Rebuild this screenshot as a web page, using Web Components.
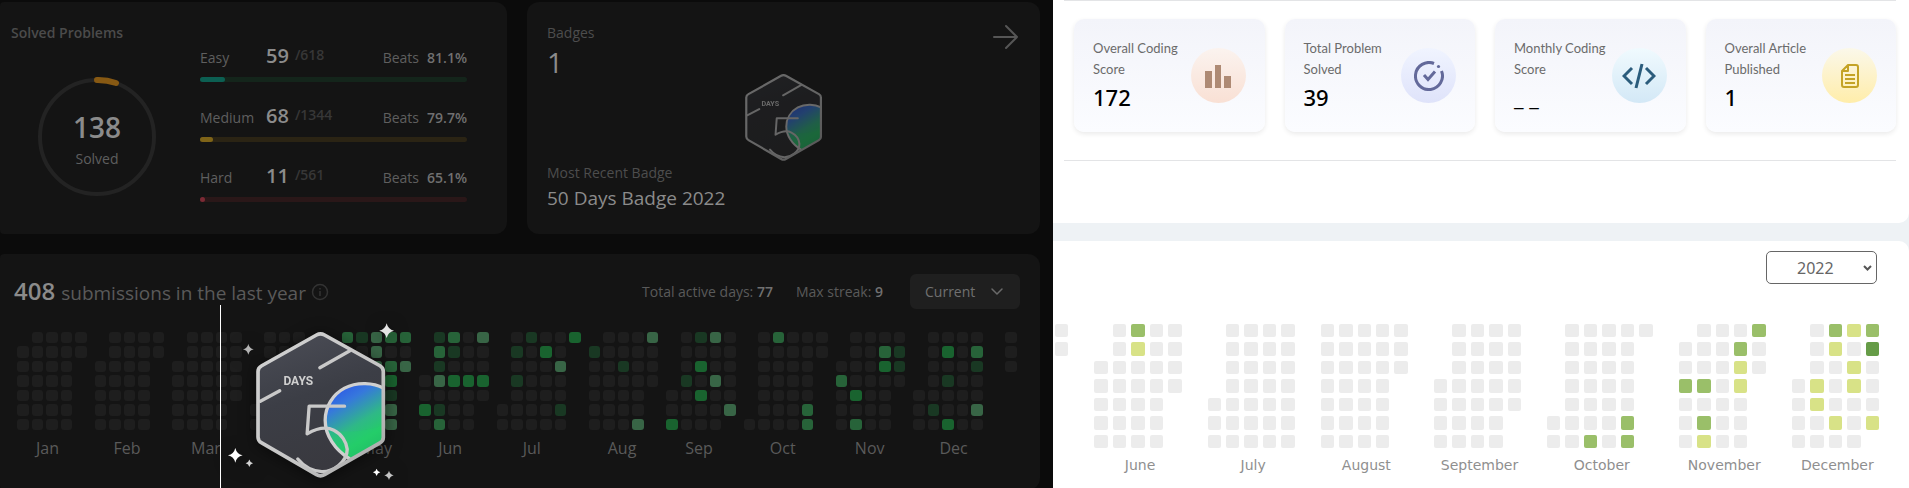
<!DOCTYPE html>
<html lang="en">
<head>
<meta charset="utf-8">
<title>Coding profiles</title>
<style>
  body { margin: 0; font-family: "Open Sans", "Noto Sans", sans-serif; background: #fff; }
</style>
</head>
<body>
<profile-page></profile-page>

<script>
const define = (name, html, setup) => {
  const template = document.createElement("template");
  template.innerHTML = html;
  customElements.define(name, class extends HTMLElement {
    constructor() {
      super();
      this.attachShadow({ mode: "open" }).append(template.content.cloneNode(true));
    }
    connectedCallback() { if (setup) setup(this, this.shadowRoot); }
  });
};

/* One string per weekday row: "." no day, "0" idle day, letters are activity levels. */
const DARK_YEAR = [
  { label: "Jan", cols: 5, rows: [".0000", "00000", "0000", "0000", "0000", "0000", "0000"] },
  { label: "Feb", cols: 5, rows: [".0000", ".0000", "0000", "0000", "0000", "0000", "0000"] },
  { label: "Mar", cols: 5, rows: [".0000", ".0000", "00000", "00000", "00000", "0000", "0000"] },
  { label: "", cols: 6, rows: [".000", ".000", ".000", ".000", ".000", "0000", "0000"] },
  { label: "May", cols: 5, rows: ["cadcc", "00d00", "00dcd", "000b", "000a", "000d", "000d"] },
  { label: "Jun", cols: 5, rows: [".ac0d", ".ca00", ".a000", "0dbbb", "00000", "ba00", "0c00"] },
  { label: "Jul", cols: 6, rows: [".0a00b", ".a0b0", ".000d", ".a000", ".0000", "0000a", "00000"] },
  { label: "Aug", cols: 5, rows: [".000d", "a0000", "00a00", "00000", "0000", "0000", "000d"] },
  { label: "Sep", cols: 5, rows: [".0ad0", ".0000", ".0b00", ".a0d0", "00b00", "0000d", "b000"] },
  { label: "Oct", cols: 6, rows: [".0c000", ".00000", ".0000", ".0000", ".0000", ".000c", "0000c"] },
  { label: "Nov", cols: 5, rows: [".0000", ".00ca", "000ba", "c0000", "0b00", "0000", "0c00"] },
  { label: "Dec", cols: 6, rows: [".0000", ".0b0c", ".000a", ".0a00", "00000", "0a00d", "00b00"] },
  { label: "", cols: 1, rows: ["0", "0", "0", ".", ".", ".", "."] }
];
const LIGHT_YEAR = [
  { label: "", cols: 1, rows: ["0", "0", ".", ".", ".", ".", "."] },
  { label: "June", cols: 5, rows: [".0g00", ".0y00", "00000", "00000", "0000", "0000", "0000"] },
  { label: "July", cols: 5, rows: [".0000", ".0000", ".0000", ".0000", "00000", "00000", "00000"] },
  { label: "August", cols: 5, rows: ["00000", "00000", "00000", "0000", "0000", "0000", "0000"] },
  { label: "September", cols: 5, rows: [".0000", ".0000", ".0000", "00000", "00000", "0000", "0000"] },
  { label: "October", cols: 6, rows: [".00000", ".0000", ".0000", ".0000", ".0000", "0000g", "00g0g"] },
  { label: "November", cols: 5, rows: [".000g", "000g0", "000y0", "gg0y", "0000", "0g00", "0y00"] },
  { label: "December", cols: 5, rows: [".0gyg", ".0y0h", ".00y0", "0y0y0", "0y000", "00y0y", "0000"] }
];

define("activity-calendar", `
  <style>
    :host { display: flex; --gap: 3px; --body: 98px; gap: 8px; font-size: 16px; line-height: 24px; color: #5a5a5a; --idle: #1e1e1e; --round: 3px; }
    :host([theme="light"]) { --gap: 5px; --body: 124px; gap: 26px; font: 14px/20px "DejaVu Sans", sans-serif; color: #8f8f8f; --idle: #ececec; --round: 2px; }
    .month { min-width: 0; flex: var(--n) 1 calc((var(--n) - 1) * var(--gap)); }
    .days { display: grid; grid-template: repeat(7, 1fr) / repeat(var(--n), 1fr); gap: var(--gap); height: var(--body); }
    .days i { border-radius: var(--round); }
    .l0 { background: var(--idle); }
    .la { background: #193823; } .lb { background: #19632f; } .lc { background: #276339; } .ld { background: #386546; }
    .ly { background: #d8e287; } .lg { background: #9abf69; } .lh { background: #669c47; }
    .label { white-space: nowrap; margin-top: 6px; padding-left: 19px; }
    .wide .label { padding-left: 26px; }
    :host([theme="light"]) .label { padding: 0 0 0 4px; margin-top: 7px; display: flex; justify-content: center; }
  </style>`, (host, root) => {
  const year = host.getAttribute("theme") === "light" ? LIGHT_YEAR : DARK_YEAR;
  for (const { label, cols, rows } of year) {
    const month = document.createElement("div");
    month.className = cols > 5 ? "month wide" : "month";
    month.style.setProperty("--n", cols);
    const cells = rows.map(r => [...r.padEnd(cols, ".")].map(c => c === "." ? "<i></i>" : `<i class="l${c}"></i>`).join("")).join("");
    month.innerHTML = `<div class="days">${cells}</div>` + (label ? `<div class="label">${label}</div>` : "");
    root.append(month);
  }
});

define("days-badge", `
  <style>
    :host { display: block; }
    svg { display: block; width: 100%; height: 100%; overflow: visible; }
    :host(:not([sparkles])) .sparkles { display: none; }
    :host(:not([sparkles])) .face { opacity: .5; }
    :host([sparkles]) svg { filter: drop-shadow(0 2px 8px #0008); }
    text { font: bold 36px Roboto, sans-serif; }
  </style>
  <svg viewBox="137 94 386 437" role="img" aria-label="50 days badge">
    <defs>
      <linearGradient id="face" x1="0" y1="0" x2="0.3" y2="1"><stop offset="0" stop-color="#4c4e57"/><stop offset=".5" stop-color="#3c3e46"/><stop offset="1" stop-color="#39393f"/></linearGradient>
      <linearGradient id="orb" x1=".15" y1=".05" x2=".6" y2="1"><stop offset="0" stop-color="#2d55e8"/><stop offset=".25" stop-color="#3678dc"/><stop offset=".58" stop-color="#2fb887"/><stop offset=".8" stop-color="#25cb69"/><stop offset="1" stop-color="#22b866"/></linearGradient>
      <linearGradient id="rim" x1="0" y1="0" x2="1" y2="1"><stop offset="0" stop-color="#d2d2d2"/><stop offset=".6" stop-color="#c6c6c6"/><stop offset="1" stop-color="#a4a4a4"/></linearGradient>
      <clipPath id="hex"><path d="M318 103Q330 96 342 103L508 195Q518 201 518 212V410Q518 420 508 426L342 521Q330 528 318 521L154 426Q143 420 143 408V212Q143 201 154 195Z"/></clipPath>
    </defs>
    <path class="face" fill="url(#face)" d="M318 103Q330 96 342 103L508 195Q518 201 518 212V410Q518 420 508 426L342 521Q330 528 318 521L154 426Q143 420 143 408V212Q143 201 154 195Z"/>
    <g clip-path="url(#hex)">
      <path fill="url(#orb)" d="M518 262C490 246 440 242 402 262C366 281 344 318 344 358C344 402 372 446 418 474L518 420Z"/>
      <path d="M348 378Q410 408 518 374V420L418 474Q366 440 348 378Z" fill="#22d16b" opacity=".35"/>
      <path d="M518 262C490 246 440 242 402 262C366 281 344 318 344 358C344 402 372 446 418 474" fill="none" stroke="#d0d0d0" stroke-width="10"/>
    </g>
    <g fill="none" stroke="#c9c9c9" stroke-width="10" stroke-linecap="round" stroke-linejoin="round">
      <path d="M328 201L418 150M150 301L208 270"/>
      <path d="M402 316H296L290 399C316 384 346 376 370 388C394 400 408 424 410 445C410 484 366 513 334 512C305 510 280 496 262 474"/>
      <path stroke="url(#rim)" stroke-width="11" d="M318 103Q330 96 342 103L508 195Q518 201 518 212V410Q518 420 508 426L342 521Q330 528 318 521L154 426Q143 420 143 408V212Q143 201 154 195Z"/>
    </g>
    <text x="219" y="254" fill="#cfcfcf">DAYS</text>
    <g class="sparkles" fill="#fff">
      <path d="M75 441Q79 459 97 463Q79 467 75 485Q71 467 53 463Q71 459 75 441Z"/>
      <path fill="#e4e4e4" d="M528 68Q532 86 550 90Q532 94 528 112Q524 94 506 90Q524 86 528 68Z"/>
      <path fill="#b4b4b4" d="M114 130Q117 143 130 146Q117 149 114 162Q111 149 98 146Q111 143 114 130Z"/>
      <path fill="#d4d4d4" d="M117 476Q119 485 128 487Q119 489 117 498Q115 489 106 487Q115 485 117 476Z"/>
      <path d="M498 503Q500 512 509 514Q500 516 498 525Q496 516 487 514Q496 512 498 503Z"/>
      <path fill="#c4c4c4" d="M535 509Q538 520 549 523Q538 526 535 537Q532 526 521 523Q532 520 535 509Z"/>
    </g>
  </svg>`);

define("difficulty-row", `
  <style>
    :host { display: block; font-size: 14px; color: #5f5f5f; }
    .head { display: flex; align-items: baseline; height: 28px; line-height: 28px; margin-bottom: 7px; padding-top: 1px; }
    .name { width: 66px; }
    .count { font-size: 20px; font-weight: 600; color: #8b8b8b; }
    .total { position: relative; bottom: 3px; margin-left: 6px; font-weight: 600; color: #373737; }
    .beats { margin-left: auto; margin-right: 8px; }
    .pct { font-weight: 600; color: #707070; }
    .bar { height: 5px; border-radius: 3px; background: var(--track); }
    .fill { height: 5px; border-radius: 3px; background: var(--fill); width: var(--part); }
  </style>
  <div class="head"><span class="name"></span><span class="count"></span><span class="total"></span><span class="beats">Beats</span><span class="pct"></span></div>
  <div class="bar"><div class="fill"></div></div>`, (host, root) => {
  for (const key of ["name", "count", "total", "pct"]) root.querySelector("." + key).textContent = host.getAttribute(key);
});

define("solved-card", `
  <style>
    :host { display: grid; grid-template-columns: 200px 1fr; padding: 0 40px 0 0; box-sizing: border-box; background: #141414; border-radius: 4px 12px 12px 4px; }
    h2 { margin: 21px 0 0 11px; font-size: 14px; line-height: 20px; font-weight: 600; color: #4b4b4b; }
    .ring { display: grid; place-items: center; width: 120px; height: 120px; margin: 34px 0 0 37px; }
    .ring > * { grid-area: 1 / 1; }
    .num { text-align: center; font-size: 14px; line-height: 24px; color: #5f5f5f; padding-top: 4px; }
    .num strong { display: block; font-size: 28px; line-height: 40px; font-weight: 600; color: #8b8b8b; }
    .rows { display: flex; flex-direction: column; gap: 19px; padding-top: 39px; }
  </style>
  <div>
    <h2>Solved Problems</h2>
    <div class="ring">
      <svg width="120" height="120" viewBox="0 0 120 120" fill="none" stroke-linecap="round"><circle cx="60" cy="60" r="57" stroke="#232323" stroke-width="4"/><path d="M60 3A57 57 0 0 1 79 6" stroke="#875913" stroke-width="6"/></svg>
      <div class="num"><strong>138</strong>Solved</div>
    </div>
  </div>
  <div class="rows">
    <difficulty-row name="Easy" count="59" total="/618" pct="81.1%" style="--track:#14251b;--fill:#0c5f52;--part:9.5%"></difficulty-row>
    <difficulty-row name="Medium" count="68" total="/1344" pct="79.7%" style="--track:#2b2414;--fill:#7f6418;--part:5%"></difficulty-row>
    <difficulty-row name="Hard" count="11" total="/561" pct="65.1%" style="--track:#2a1718;--fill:#7b2a34;--part:2%"></difficulty-row>
  </div>`);

define("badges-card", `
  <style>
    :host { display: grid; grid-template: 1fr / 1fr; padding: 20px 20px 22px; box-sizing: border-box; background: #141414; border-radius: 12px; }
    .text, days-badge, a { grid-area: 1 / 1; }
    .text { display: flex; flex-direction: column; font-size: 14px; line-height: 22px; color: #4d4d4d; }
    .n { font-size: 28px; line-height: 36px; color: #8b8b8b; }
    .last { margin-top: auto; }
    .title { font-size: 19px; line-height: 28px; color: #8b8b8b; }
    days-badge { width: 77px; height: 87px; place-self: center; opacity: .45; }
    a { place-self: start end; color: #565656; width: 30px; height: 30px; }
    svg { display: block; }
  </style>
  <div class="text"><span>Badges</span><span class="n">1</span><span class="last">Most Recent Badge</span><span class="title">50 Days Badge 2022</span></div>
  <days-badge></days-badge>
  <a href="#badges" aria-label="All badges"><svg width="30" height="30" viewBox="0 0 30 30" fill="none" stroke="currentColor" stroke-width="2" stroke-linecap="round" stroke-linejoin="round"><path d="M4 15H27M16 4L27 15L16 26"/></svg></a>`);

define("submissions-card", `
  <style>
    :host { display: block; padding: 20px 20px 24px 14px; box-sizing: border-box; background: #141414; border-radius: 4px 12px 12px 4px; }
    header { display: flex; align-items: center; height: 35px; font-size: 14px; color: #5a5a5a; margin-bottom: 23px; }
    h2 { display: flex; align-items: baseline; gap: 6px; margin: 0; font-size: 19px; line-height: 30px; font-weight: 400; color: #5a5a5a; }
    h2 b { font-size: 24px; font-weight: 600; color: #8b8b8b; }
    .info { margin: 0 auto 0 5px; }
    .streak { margin: 0 27px 0 23px; }
    b { font-weight: 600; color: #707070; }
    .pick { display: grid; align-items: center; }
    .pick > * { grid-area: 1 / 1; }
    select { appearance: none; width: 110px; height: 35px; padding: 0 15px; border: 0; border-radius: 6px; background: #1f1f1f; color: #707070; font: inherit; }
    .pick svg { justify-self: end; margin-right: 16px; pointer-events: none; }
    activity-calendar { margin: 0 3px; }
  </style>
  <header>
    <h2><b>408</b>submissions in the last year</h2>
    <svg class="info" width="18" height="18" viewBox="0 0 18 18" fill="none" stroke="#333" stroke-width="1.5"><circle cx="9" cy="9" r="7.5"/><path d="M9 8V13M9 5V6.5"/></svg>
    <span>Total active days: <b>77</b></span>
    <span class="streak">Max streak: <b>9</b></span>
    <span class="pick"><select aria-label="Year"><option>Current</option></select><svg width="14" height="10" viewBox="0 0 14 10" fill="none" stroke="#6a6a6a" stroke-width="1.5" stroke-linecap="round" stroke-linejoin="round"><path d="M2 2L7 7L12 2"/></svg></span>
  </header>
  <activity-calendar theme="dark"></activity-calendar>`);

define("stat-card", `
  <style>
    :host { display: flex; justify-content: space-between; align-items: center; height: 113px; padding: 0 19px; box-sizing: border-box; border-radius: 10px; background: linear-gradient(#f3f4fa, #fbfcff); box-shadow: 0 2px 5px #00000016; }
    .name { width: 94px; font: 13px/21px Lato, sans-serif; color: #6b6b6b; }
    .value { font: 500 22px/34px "Noto Sans", sans-serif; color: #000; }
    .disc { display: grid; flex: none; place-items: center; width: 55px; height: 55px; border-radius: 50%; background: var(--disc); }
  </style>
  <div><div class="name"><slot name="name"></slot></div><div class="value"><slot name="value"></slot></div></div>
  <div class="disc"><slot name="icon"></slot></div>`);

define("practice-panel", `
  <style>
    :host { display: flex; flex-direction: column; gap: 18px; background: #eef2f5; min-width: 0; }
    .top { box-sizing: border-box; height: 223px; padding: 0 13px 0 11px; background: #fff; border-radius: 0 0 10px 0; }
    hr { margin: 0; border: 0; height: 1px; background: #e3e4e6; }
    .stats { display: grid; grid-template-columns: repeat(4, 1fr); gap: 20px; padding: 18px 0 28px 10px; }
    .bottom { flex: 1; padding: 10px 30px 18px 2px; background: #fff; border-radius: 0 10px 0 0; }
    .pick { display: grid; align-items: center; width: 111px; margin: 0 2px 40px auto; }
    .pick > * { grid-area: 1 / 1; }
    select { appearance: none; width: 111px; height: 33px; padding: 0 30px; border: 1px solid #666; border-radius: 5px; background: #fff; color: #666; font: 16px "Noto Sans", sans-serif; }
    .pick svg { justify-self: end; margin-right: 4px; pointer-events: none; }
    svg { display: block; }
  </style>
  <section class="top">
    <hr>
    <div class="stats">
      <stat-card style="--disc:linear-gradient(#fbf3ef,#f9e0d4)"><span slot="name">Overall Coding Score</span><span slot="value">172</span>
        <svg slot="icon" width="28" height="26" viewBox="0 0 28 26" fill="#ae8a74"><path d="M1 8h7v17H1zM11 2h6v23h-6zM20 13h7v12h-7z"/></svg></stat-card>
      <stat-card style="--disc:linear-gradient(#f0f4ff,#dfe3fa)"><span slot="name">Total Problem Solved</span><span slot="value">39</span>
        <svg slot="icon" width="30" height="30" viewBox="0 0 30 30" fill="none" stroke="#63699a" stroke-width="3"><path d="M20 2.500A13.500 13.500 0 1 0 27.500 10"/><path d="M10 14L14 18.500L21 10.500"/><circle cx="24.500" cy="5.500" r="1.600" fill="#63699a" stroke="none"/></svg></stat-card>
      <stat-card style="--disc:linear-gradient(#f0fafe,#d3e8f6)"><span slot="name">Monthly Coding Score</span><span slot="value">_ _</span>
        <svg slot="icon" width="34" height="26" viewBox="0 0 34 26" fill="none" stroke="#2b5c7c" stroke-width="3"><path d="M10 5L2 13L10 21M24 5L32 13L24 21M20 1L14 25"/></svg></stat-card>
      <stat-card style="--disc:linear-gradient(#fbf8ea,#ffedaa)"><span slot="name">Overall Article Published</span><span slot="value">1</span>
        <svg slot="icon" width="20" height="26" viewBox="0 0 20 26" fill="none" stroke="#c4a325" stroke-width="2"><path d="M8 2H16Q18 2 18 4V22Q18 24 16 24H4Q2 24 2 22V8ZM8 2V8H2M5 12H15M5 16H15M5 20H15" stroke-linejoin="round"/></svg></stat-card>
    </div>
    <hr>
  </section>
  <section class="bottom">
    <div class="pick"><select aria-label="Year"><option>2022</option></select><svg width="11" height="8" viewBox="0 0 11 8" fill="none" stroke="#555" stroke-width="2"><path d="M2 2L5.500 5.500L9 2"/></svg></div>
    <activity-calendar theme="light"></activity-calendar>
  </section>`);

define("profile-page", `
  <style>
    :host { display: grid; grid-template-columns: 1053fr 856fr; min-height: 100vh; }
    .dark { position: relative; min-width: 0; box-sizing: border-box; padding: 2px 13px 3px 0; background: #0b0b0b; display: grid; grid-template: 232px 1fr / 507fr 513fr; gap: 20px; overflow: hidden; }
    submissions-card { grid-column: 1 / -1; }
    .caret { position: absolute; left: 220px; top: 305px; bottom: 0; width: 1px; background: #fff; }
    .award { position: absolute; left: 256px; top: 332px; width: 129px; height: 146px; }
  </style>
  <section class="dark">
    <solved-card></solved-card>
    <badges-card></badges-card>
    <submissions-card></submissions-card>
    <div class="caret"></div>
    <days-badge class="award" sparkles></days-badge>
  </section>
  <practice-panel></practice-panel>`);
</script>
</body>
</html>
